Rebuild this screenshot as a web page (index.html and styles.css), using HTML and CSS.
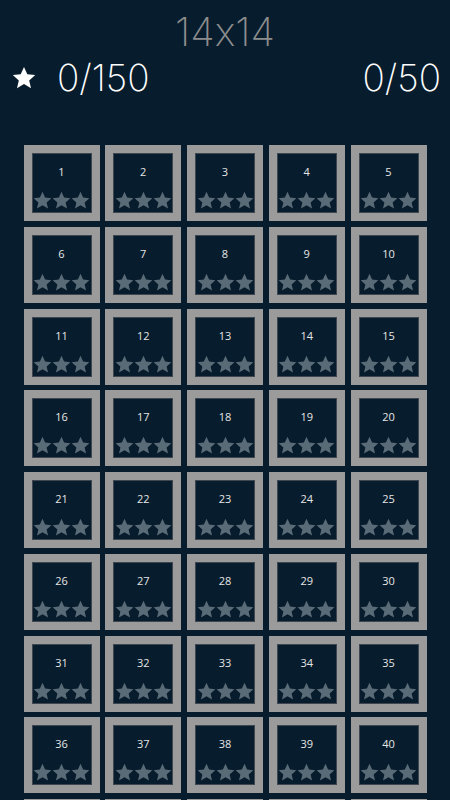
FILE: index.html
```html
<!DOCTYPE html>
<html>
<head>
<meta charset="utf-8">
<link rel="stylesheet" href="styles.css">
</head>
<body>
<svg class="defs" width="0" height="0" aria-hidden="true">
  <symbol id="star" viewBox="0 0 24 24"><path d="M12 1l3.3 7.3 7.9.8-6 5.3 1.8 7.8L12 18.1l-7 4.1 1.8-7.8-6-5.3 7.9-.8z"/></symbol>
</svg>
<header class="top">
  <h1 class="title">14x14</h1>
  <div class="stats">
    <div class="stat"><svg class="stat-star"><use href="#star"/></svg><span>0/150</span></div>
    <div class="stat">0/50</div>
  </div>
</header>
<main class="grid">
  <div class="tile"><span class="num">1</span><div class="stars"><svg><use href="#star"/></svg><svg><use href="#star"/></svg><svg><use href="#star"/></svg></div></div>
  <div class="tile"><span class="num">2</span><div class="stars"><svg><use href="#star"/></svg><svg><use href="#star"/></svg><svg><use href="#star"/></svg></div></div>
  <div class="tile"><span class="num">3</span><div class="stars"><svg><use href="#star"/></svg><svg><use href="#star"/></svg><svg><use href="#star"/></svg></div></div>
  <div class="tile"><span class="num">4</span><div class="stars"><svg><use href="#star"/></svg><svg><use href="#star"/></svg><svg><use href="#star"/></svg></div></div>
  <div class="tile"><span class="num">5</span><div class="stars"><svg><use href="#star"/></svg><svg><use href="#star"/></svg><svg><use href="#star"/></svg></div></div>
  <div class="tile"><span class="num">6</span><div class="stars"><svg><use href="#star"/></svg><svg><use href="#star"/></svg><svg><use href="#star"/></svg></div></div>
  <div class="tile"><span class="num">7</span><div class="stars"><svg><use href="#star"/></svg><svg><use href="#star"/></svg><svg><use href="#star"/></svg></div></div>
  <div class="tile"><span class="num">8</span><div class="stars"><svg><use href="#star"/></svg><svg><use href="#star"/></svg><svg><use href="#star"/></svg></div></div>
  <div class="tile"><span class="num">9</span><div class="stars"><svg><use href="#star"/></svg><svg><use href="#star"/></svg><svg><use href="#star"/></svg></div></div>
  <div class="tile"><span class="num">10</span><div class="stars"><svg><use href="#star"/></svg><svg><use href="#star"/></svg><svg><use href="#star"/></svg></div></div>
  <div class="tile"><span class="num">11</span><div class="stars"><svg><use href="#star"/></svg><svg><use href="#star"/></svg><svg><use href="#star"/></svg></div></div>
  <div class="tile"><span class="num">12</span><div class="stars"><svg><use href="#star"/></svg><svg><use href="#star"/></svg><svg><use href="#star"/></svg></div></div>
  <div class="tile"><span class="num">13</span><div class="stars"><svg><use href="#star"/></svg><svg><use href="#star"/></svg><svg><use href="#star"/></svg></div></div>
  <div class="tile"><span class="num">14</span><div class="stars"><svg><use href="#star"/></svg><svg><use href="#star"/></svg><svg><use href="#star"/></svg></div></div>
  <div class="tile"><span class="num">15</span><div class="stars"><svg><use href="#star"/></svg><svg><use href="#star"/></svg><svg><use href="#star"/></svg></div></div>
  <div class="tile"><span class="num">16</span><div class="stars"><svg><use href="#star"/></svg><svg><use href="#star"/></svg><svg><use href="#star"/></svg></div></div>
  <div class="tile"><span class="num">17</span><div class="stars"><svg><use href="#star"/></svg><svg><use href="#star"/></svg><svg><use href="#star"/></svg></div></div>
  <div class="tile"><span class="num">18</span><div class="stars"><svg><use href="#star"/></svg><svg><use href="#star"/></svg><svg><use href="#star"/></svg></div></div>
  <div class="tile"><span class="num">19</span><div class="stars"><svg><use href="#star"/></svg><svg><use href="#star"/></svg><svg><use href="#star"/></svg></div></div>
  <div class="tile"><span class="num">20</span><div class="stars"><svg><use href="#star"/></svg><svg><use href="#star"/></svg><svg><use href="#star"/></svg></div></div>
  <div class="tile"><span class="num">21</span><div class="stars"><svg><use href="#star"/></svg><svg><use href="#star"/></svg><svg><use href="#star"/></svg></div></div>
  <div class="tile"><span class="num">22</span><div class="stars"><svg><use href="#star"/></svg><svg><use href="#star"/></svg><svg><use href="#star"/></svg></div></div>
  <div class="tile"><span class="num">23</span><div class="stars"><svg><use href="#star"/></svg><svg><use href="#star"/></svg><svg><use href="#star"/></svg></div></div>
  <div class="tile"><span class="num">24</span><div class="stars"><svg><use href="#star"/></svg><svg><use href="#star"/></svg><svg><use href="#star"/></svg></div></div>
  <div class="tile"><span class="num">25</span><div class="stars"><svg><use href="#star"/></svg><svg><use href="#star"/></svg><svg><use href="#star"/></svg></div></div>
  <div class="tile"><span class="num">26</span><div class="stars"><svg><use href="#star"/></svg><svg><use href="#star"/></svg><svg><use href="#star"/></svg></div></div>
  <div class="tile"><span class="num">27</span><div class="stars"><svg><use href="#star"/></svg><svg><use href="#star"/></svg><svg><use href="#star"/></svg></div></div>
  <div class="tile"><span class="num">28</span><div class="stars"><svg><use href="#star"/></svg><svg><use href="#star"/></svg><svg><use href="#star"/></svg></div></div>
  <div class="tile"><span class="num">29</span><div class="stars"><svg><use href="#star"/></svg><svg><use href="#star"/></svg><svg><use href="#star"/></svg></div></div>
  <div class="tile"><span class="num">30</span><div class="stars"><svg><use href="#star"/></svg><svg><use href="#star"/></svg><svg><use href="#star"/></svg></div></div>
  <div class="tile"><span class="num">31</span><div class="stars"><svg><use href="#star"/></svg><svg><use href="#star"/></svg><svg><use href="#star"/></svg></div></div>
  <div class="tile"><span class="num">32</span><div class="stars"><svg><use href="#star"/></svg><svg><use href="#star"/></svg><svg><use href="#star"/></svg></div></div>
  <div class="tile"><span class="num">33</span><div class="stars"><svg><use href="#star"/></svg><svg><use href="#star"/></svg><svg><use href="#star"/></svg></div></div>
  <div class="tile"><span class="num">34</span><div class="stars"><svg><use href="#star"/></svg><svg><use href="#star"/></svg><svg><use href="#star"/></svg></div></div>
  <div class="tile"><span class="num">35</span><div class="stars"><svg><use href="#star"/></svg><svg><use href="#star"/></svg><svg><use href="#star"/></svg></div></div>
  <div class="tile"><span class="num">36</span><div class="stars"><svg><use href="#star"/></svg><svg><use href="#star"/></svg><svg><use href="#star"/></svg></div></div>
  <div class="tile"><span class="num">37</span><div class="stars"><svg><use href="#star"/></svg><svg><use href="#star"/></svg><svg><use href="#star"/></svg></div></div>
  <div class="tile"><span class="num">38</span><div class="stars"><svg><use href="#star"/></svg><svg><use href="#star"/></svg><svg><use href="#star"/></svg></div></div>
  <div class="tile"><span class="num">39</span><div class="stars"><svg><use href="#star"/></svg><svg><use href="#star"/></svg><svg><use href="#star"/></svg></div></div>
  <div class="tile"><span class="num">40</span><div class="stars"><svg><use href="#star"/></svg><svg><use href="#star"/></svg><svg><use href="#star"/></svg></div></div>
  <div class="tile tile-edge"></div>
  <div class="tile tile-edge"></div>
  <div class="tile tile-edge"></div>
  <div class="tile tile-edge"></div>
  <div class="tile tile-edge"></div>
</main>
</body>
</html>
```

FILE: styles.css
```css
html, body {
  margin: 0;
  padding: 0;
  background: #071c2c;
}
body {
  font-family: "Open Sans", "DejaVu Sans", sans-serif;
  overflow: hidden;
  height: 800px;
}
.defs {
  position: absolute;
  width: 0;
  height: 0;
}
.top {
  display: flex;
  flex-direction: column;
}
.title {
  margin: 0;
  padding-top: 9px;
  font-family: Inter, "Open Sans", sans-serif;
  font-feature-settings: "calt" 0;
  font-size: 40px;
  font-weight: 200;
  line-height: 46px;
  color: #8c8c8c;
  text-align: center;
}
.stats {
  display: flex;
  justify-content: space-between;
  align-items: center;
  padding: 3px 9px 0 12px;
  height: 40px;
}
.stat {
  display: flex;
  align-items: center;
  gap: 21px;
  color: #ffffff;
  font-family: Inter, "Open Sans", sans-serif;
  font-size: 37px;
  font-weight: 200;
  line-height: 40px;
}
.stat-star {
  width: 24px;
  height: 24px;
  fill: #ffffff;
}
.grid {
  display: grid;
  grid-template-columns: repeat(5, 76px);
  grid-auto-rows: 76px;
  gap: 5.75px;
  justify-content: center;
  padding-top: 47px;
}
.tile {
  box-sizing: border-box;
  border: 8px solid #9b9b9b;
  box-shadow: inset 0 0 0 1px #3e4650;
  display: flex;
  flex-direction: column;
  align-items: center;
  padding-top: 12px;
}
.num {
  font-size: 11px;
  line-height: 14px;
  color: #e6e6e6;
}
.stars {
  margin-top: auto;
  margin-bottom: 3px;
  display: flex;
}
.stars svg {
  width: 19px;
  height: 19px;
  fill: #5a6b78;
}
```
